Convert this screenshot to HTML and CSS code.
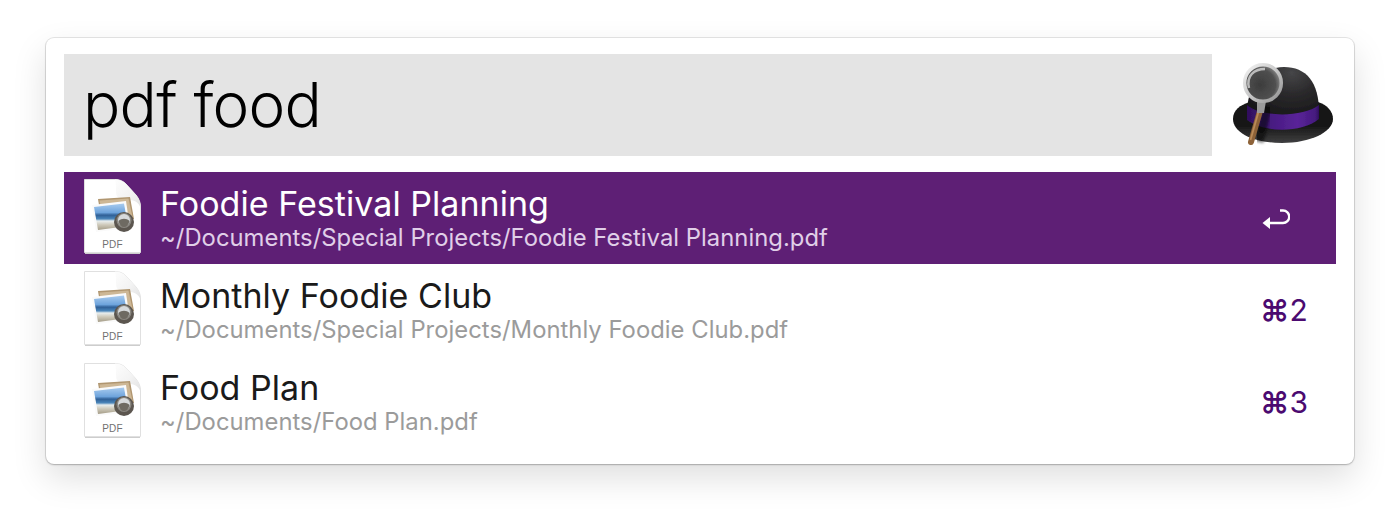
FILE: index.html
```html
<!DOCTYPE html>
<html lang="en">
<head>
<meta charset="utf-8">
<title>Alfred</title>
<link rel="stylesheet" href="styles.css">
</head>
<body>
<svg class="defs" width="0" height="0" aria-hidden="true">
  <defs>
    <filter id="soft" x="-5%" y="-5%" width="110%" height="110%"><feGaussianBlur stdDeviation=".55"/></filter>
    <filter id="softer" x="-20%" y="-20%" width="140%" height="140%"><feGaussianBlur stdDeviation="1.6"/></filter>
    <radialGradient id="dome" cx=".62" cy=".1" r=".9"><stop offset="0" stop-color="#464648"/><stop offset=".4" stop-color="#2b2a2c"/><stop offset="1" stop-color="#121213"/></radialGradient>
    <linearGradient id="brim" x1="0" y1="0" x2="0" y2="1"><stop offset="0" stop-color="#111"/><stop offset=".6" stop-color="#161616"/><stop offset="1" stop-color="#3f3f40"/></linearGradient>
    <linearGradient id="band" x1="0" y1="0" x2="1" y2="0"><stop offset="0" stop-color="#2f0f5c"/><stop offset=".3" stop-color="#451a7e"/><stop offset=".7" stop-color="#5a2499"/><stop offset=".95" stop-color="#451a7e"/><stop offset="1" stop-color="#2f0f5c"/></linearGradient>
    <radialGradient id="glass" cx=".42" cy=".55" r=".65"><stop offset="0" stop-color="#3c3c3c"/><stop offset=".65" stop-color="#505050"/><stop offset="1" stop-color="#a4a4a4"/></radialGradient>
    <linearGradient id="rim" x1="0" y1="0" x2="1" y2="1"><stop offset="0" stop-color="#f4f4f4"/><stop offset=".5" stop-color="#c8c8c8"/><stop offset="1" stop-color="#909090"/></linearGradient>
    <linearGradient id="fold" x1="0" y1="0" x2="1" y2="1"><stop offset="0" stop-color="#fdfdfd"/><stop offset=".55" stop-color="#f3f3f3"/><stop offset="1" stop-color="#e2e2e2"/></linearGradient>
    <linearGradient id="sea" x1="0" y1="0" x2="0" y2="1"><stop offset="0" stop-color="#a9ccef"/><stop offset=".34" stop-color="#6ea4dc"/><stop offset=".44" stop-color="#2f5f96"/><stop offset=".58" stop-color="#4b86ba"/><stop offset=".66" stop-color="#e9eeee"/><stop offset=".8" stop-color="#cfcabb"/><stop offset="1" stop-color="#a49c87"/></linearGradient>
    <symbol id="pdf" viewBox="0 0 58 76">
      <path d="M.5 .5H31C36 .5 39 2 42 5L52 16C55 20 56.500 23 56.500 28V73.500H.5Z" fill="#fff" stroke="#e0e0e0"/>
      <path d="M1 74.500H56" stroke="#cdcdcd"/>
      <path d="M31 .5C36 .5 39 2 42 5L52 16C55 20 56.500 23 56.500 28 54 23 50 21 44 20.500 36 20 32 20 32 12 32 8 32 4 31 .5Z" fill="url(#fold)"/>
      <g filter="url(#soft)">
        <path d="M14 20 46 18 50 40 18 44Z" fill="#b09670"/>
        <path d="M15.500 21.500 44.500 19.500 48.500 38 19 42Z" fill="#cdb795"/>
        <path d="M8 26 42 22 46 49 12 53Z" fill="#fafafa"/>
        <path d="M10 28 40 24.500 44 47 14 51Z" fill="url(#sea)"/>
        <circle cx="40" cy="43" r="10" fill="#5b5650"/>
        <circle cx="40" cy="41.500" r="7.500" fill="#8a8780"/>
        <circle cx="40" cy="41" r="6" fill="#d7dadc"/>
        <path d="M34.500 42c3-3 8-3 11 0-1 4-3 6-5.500 6S35.500 46 34.500 42Z" fill="#6e6a62"/>
      </g>
      <text x="28.500" y="69" class="pdf-label" text-anchor="middle">PDF</text>
    </symbol>
  </defs>
</svg>
<main class="window">
  <header class="search">
    <div class="field">pdf food</div>
    <svg class="hat" viewBox="0 0 110 90" role="img" aria-label="Alfred">
      <g filter="url(#soft)">
        <path d="M3 59C3 50 10 45 20 42 40 37 70 37 88 42 97 45 103 51 103 59 103 72 80 83 52 83 24 83 3 73 3 59Z" fill="url(#brim)"/>
        <path d="M17 52C18 22 34 7 54 7 76 7 89 22 89 52 70 70 36 70 17 52Z" fill="url(#dome)"/>
        <path d="M17 45C30 57 72 58 89 45V59C72 73 34 73 17 60Z" fill="url(#band)"/>
        <path d="M38 46 29 82" stroke="#000" stroke-width="9" opacity=".55" filter="url(#softer)"/>
        <path d="M30 51 21 82" stroke="#8d6238" stroke-width="6" stroke-linecap="round"/>
        <path d="M29 50 20.500 80" stroke="#b98a58" stroke-width="1.800"/>
        <path d="M27 41H36L34 53H27Z" fill="#9a9a9a"/>
        <circle cx="33" cy="23" r="18.300" fill="url(#glass)" stroke="url(#rim)" stroke-width="3.500"/>
        <path d="M19 28C16 16 24 9 35 9" fill="none" stroke="#e9e9e9" stroke-width="2.500" opacity=".7"/>
      </g>
    </svg>
  </header>
  <ul class="results">
    <li class="row selected">
      <svg class="file"><use href="#pdf"/></svg>
      <div class="texts"><div class="title">Foodie Festival Planning</div><div class="path">~/Documents/Special Projects/Foodie Festival Planning.pdf</div></div>
      <svg class="enter" viewBox="0 0 28 24" aria-label="Return"><path d="M18 4.500h3a6.250 6.250 0 0 1 0 12.500H7" fill="none" stroke="#fff" stroke-width="2.400"/><path d="M.5 17 8 11V23Z" fill="#fff"/></svg>
    </li>
    <li class="row">
      <svg class="file"><use href="#pdf"/></svg>
      <div class="texts"><div class="title">Monthly Foodie Club</div><div class="path">~/Documents/Special Projects/Monthly Foodie Club.pdf</div></div>
      <div class="shortcut"><span class="cmd">⌘</span>2</div>
    </li>
    <li class="row">
      <svg class="file"><use href="#pdf"/></svg>
      <div class="texts"><div class="title">Food Plan</div><div class="path">~/Documents/Food Plan.pdf</div></div>
      <div class="shortcut"><span class="cmd">⌘</span>3</div>
    </li>
  </ul>
</main>
</body>
</html>
```
FILE: styles.css
```css
* { box-sizing: border-box; }
html, body { margin: 0; height: 518px; overflow: hidden; background: #fff; }
body { padding: 38px 46px 0; font-family: Inter, "Liberation Sans", sans-serif; }
.defs { position: absolute; }
.window {
  width: 1308px;
  height: 426px;
  padding: 16px 18px;
  background: #fff;
  border-radius: 8px;
  box-shadow: 0 0 0 1px rgba(0,0,0,.09), 0 1px 2px rgba(0,0,0,.2), 0 14px 34px rgba(0,0,0,.13);
}
.search { display: flex; align-items: center; height: 102px; }
.field {
  flex: none;
  width: 1148px;
  height: 102px;
  padding-left: 19px;
  background: #e4e4e4;
  color: #000;
  font-size: 62px;
  font-weight: 300;
  line-height: 102px;
  letter-spacing: -.75px;
}
.hat { flex: none; width: 110px; height: 90px; margin-left: 18px; }
.results { list-style: none; margin: 16px 0 0; padding: 0; }
.row { display: flex; align-items: center; height: 92px; padding-left: 20px; color: #1a1a1a; }
.file { width: 58px; height: 76px; flex: none; margin-top: -2px; }
.pdf-label { font: 10px "Liberation Sans", sans-serif; letter-spacing: .1px; fill: #707070; }
.texts { flex: 1; margin-left: 18px; padding-bottom: 2px; }
.title { font-size: 34px; line-height: 42px; font-weight: 400; letter-spacing: .04px; }
.path { font-size: 23.800px; line-height: 26px; font-weight: 400; letter-spacing: .03px; color: #9b9b9b; }
.selected { background: #5e1f75; color: #fff; }
.selected .path { color: #e0cfe8; }
.enter { flex: none; width: 28px; height: 24px; margin-right: 46px; }
.shortcut { flex: none; width: 76px; color: #4b0a70; font-size: 30px; font-weight: 400; }
.cmd { font-weight: 600; }
```
